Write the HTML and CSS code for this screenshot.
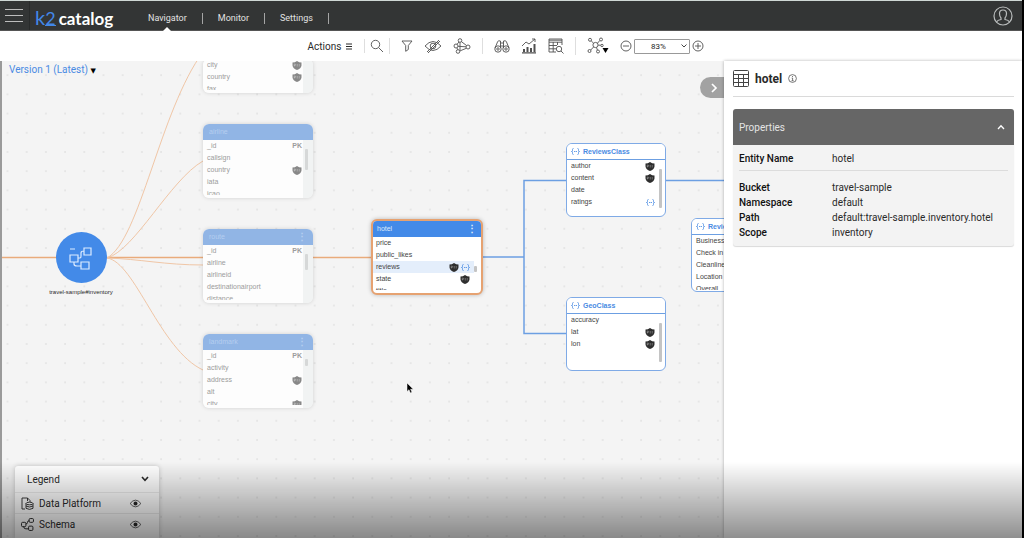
FILE: index.html
```html
<!DOCTYPE html>
<html lang="en">
<head>
  <meta charset="UTF-8" />
  <meta name="viewport" content="width=device-width, initial-scale=1.0"/>
  <title>K2 Catalog</title>
  <link rel="stylesheet" href="styles.css">
</head>
<body>
  <!-- shared icons -->
  <svg class="defs" aria-hidden="true">
    <symbol id="pii" viewBox="0 0 20 18">
      <path d="M1 3 Q6 3 10 0 Q14 3 19 3 V9 Q18 15 10 18 Q2 15 1 9Z" fill="currentColor"/>
      <path d="M4.500 11V6H6.500Q8 7.500 6.500 9H4.500M10.500 6v5M14.500 6v5" fill="none" stroke="#fff" stroke-width="1" opacity=".6"/>
    </symbol>
    <symbol id="obj" viewBox="0 0 18 14">
      <path d="M5 1Q3 1 3 3V5Q3 7 1 7Q3 7 3 9V11Q3 13 5 13M13 1Q15 1 15 3V5Q15 7 17 7Q15 7 15 9V11Q15 13 13 13M6 7H8.500M9.500 7H12" fill="none" stroke="currentColor" stroke-width="1.700"/>
    </symbol>
    <symbol id="eye" viewBox="0 0 14 10">
      <path d="M1 5Q7 -2.500 13 5Q7 12.500 1 5Z" fill="none" stroke="currentColor" stroke-width=".8"/>
      <circle cx="7" cy="5" r="2.200" fill="currentColor"/>
    </symbol>
    <symbol id="schema" viewBox="0 0 24 24">
      <path d="M1 9h8v7H1zM15 2h7v7h-7zM12 16h8v7h-8zM9 12h2Q12 12 12 10V7Q12 5 15 5M5 16v2Q5 20 8 20h4M1 3h5" fill="none" stroke="currentColor" stroke-width="1.200"/>
    </symbol>
    <symbol id="schema-small" viewBox="0 0 24 24">
      <rect x="1" y="8" width="8" height="8" rx="2" fill="none" stroke="currentColor" stroke-width="1.800"/>
      <rect x="15" y="1" width="8" height="7" rx="2" fill="none" stroke="currentColor" stroke-width="1.800"/>
      <rect x="14" y="15" width="8" height="8" rx="2" fill="none" stroke="currentColor" stroke-width="1.800"/>
      <path d="M9 11Q12 11 12 8T15 5M5 16Q5 20 9 20H14" fill="none" stroke="currentColor" stroke-width="1.800"/>
    </symbol>
  </svg>

  <header class="topbar">
    <button class="menu-btn" aria-label="Menu"><span></span><span></span><span></span></button>
    <a class="logo" href="#"><span class="logo-k2">k<small>2</small></span><span class="logo-name">catalog</span></a>
    <nav class="nav">
      <a class="active" href="#">Navigator</a>
      <a href="#">Monitor</a>
      <a href="#">Settings</a>
    </nav>
    <button class="user-btn" aria-label="Account">
      <svg width="20" height="20" viewBox="0 0 20 20" fill="none" stroke="currentColor" stroke-width="1.200">
        <circle cx="10" cy="10" r="9"/>
        <path d="M3.500 16Q4.500 14 8 13.500V12Q6.500 10.500 6.500 7.500Q6.500 4 10 4Q13.500 4 13.500 7.500Q13.500 10.500 12 12V13.500Q15.500 14 16.500 16"/>
      </svg>
    </button>
  </header>

  <div class="toolbar">
    <button class="actions">Actions <svg width="6" height="7" viewBox="0 0 6 7" stroke="currentColor"><path d="M0 1h6M0 3.500h6M0 6h6"/></svg></button>
    <div class="tools">
      <button aria-label="Search"><svg width="14" height="14" viewBox="0 0 14 14"><circle cx="5.500" cy="5.500" r="4.200"/><path d="M8.600 8.600L13 13"/></svg></button>
    </div>
    <div class="tools">
      <button aria-label="Filter"><svg width="12" height="12" viewBox="0 0 12 12"><path d="M1 1H11L7.300 5.500V9.500L4.700 11.300V5.500Z"/></svg></button>
      <button aria-label="Hide"><svg width="18" height="14" viewBox="0 0 18 14"><path d="M1 7Q9 -2 17 7Q9 16 1 7ZM15 1L3 13M16 2L4 14"/><circle cx="9" cy="7" r="2.800"/></svg></button>
      <button aria-label="Lineage"><svg width="18" height="16" viewBox="0 0 18 16"><circle cx="7" cy="2.500" r="1.800"/><circle cx="3" cy="8" r="2"/><circle cx="15" cy="9" r="2"/><circle cx="5" cy="13.500" r="1.800"/><path d="M6 4L4 6.300M8.500 3.700L13.500 7.500M5 8.300L13 8.800M4 10L4.700 11.700M6.700 13L13.300 10.300M7 4.300V12"/></svg></button>
    </div>
    <div class="tools">
      <button aria-label="Explore"><svg width="16" height="14" viewBox="0 0 16 14"><circle cx="4" cy="10" r="3.200"/><circle cx="12" cy="10" r="3.200"/><circle cx="4" cy="10" r="1.200"/><circle cx="12" cy="10" r="1.200"/><path d="M1 9L3.500 3Q4 1 6.500 2V9M15 9L12.500 3Q12 1 9.500 2V9M6.500 4h3M6.500 7h3"/></svg></button>
      <button aria-label="Statistics"><svg width="16" height="16" viewBox="0 0 16 16"><path d="M1 8L5 4L8 6L14 1M11 1H14V4"/><path class="fill" d="M2 11h2v3H2zM5.500 9h2v5h-2zM9 10h2v4H9zM12.500 6h2v8h-2zM1 14.300h14v1.200H1z"/></svg></button>
      <button aria-label="Table search"><svg width="16" height="16" viewBox="0 0 16 16"><path d="M14 7V1H1V14H8M1 2.200H14M1 4.200H14M1 7.500H9M1 10.800H8M5.200 4V14M9.500 4V7"/><circle cx="11" cy="11" r="2.700"/><path d="M13 13L15.500 15.500"/></svg></button>
    </div>
    <div class="tools tools-view">
      <button class="layout-btn" aria-label="Layout"><svg width="22" height="18" viewBox="0 0 22 18"><circle cx="8.500" cy="8" r="2.600"/><circle cx="3" cy="2.800" r="1.500"/><circle cx="14" cy="2.500" r="1.500"/><circle cx="2.500" cy="14" r="1.500"/><circle cx="11" cy="14.500" r="1.500"/><circle cx="15" cy="8.500" r="1.200"/><path d="M4.200 3.900L6.600 6.200M12.800 3.500L10.500 6.200M3.700 13L6.600 10M10.400 13L9.500 10.500M11.200 8.200H13.700"/><path class="arrow" d="M15.500 11H21.500L18.500 16Z"/></svg></button>
      <button aria-label="Zoom out"><svg width="12" height="12" viewBox="0 0 12 12"><circle cx="6" cy="6" r="5"/><path d="M3 6h6"/></svg></button>
      <select class="zoom" aria-label="Zoom level">
        <option>83%</option>
        <option>100%</option>
      </select>
      <button aria-label="Zoom in"><svg width="12" height="12" viewBox="0 0 12 12"><circle cx="6" cy="6" r="5"/><path d="M3 6h6M6 3v6"/></svg></button>
    </div>
  </div>

  <main class="main">
    <section class="canvas">
      <svg class="edges" aria-hidden="true">
        <defs>
          <pattern id="dots" x="6.500" y="-6" width="19.200" height="19.200" patternUnits="userSpaceOnUse">
            <circle cx="1" cy="1" r=".8" fill="#d4d4d4"/>
          </pattern>
        </defs>
        <rect width="100%" height="100%" fill="url(#dots)"/>
        <g class="orange">
          <path class="strong" d="M0 196.500H372"/>
          <path d="M107 197C140 179 160 49 203 -9"/>
          <path d="M107 197C135 189 170 119 203 100"/>
          <path d="M107 197C140 198 165 204 203 204"/>
          <path d="M107 197C135 201 160 289 203 309"/>
        </g>
        <path class="blue" d="M482 196H524M566 119.500H524V272.500H566M666 119.500H760"/>
      </svg>

      <button class="version">Version 1 (Latest) <span>▼</span></button>

      <div class="schema">
        <div class="schema-circle"><svg width="24" height="24"><use href="#schema"/></svg></div>
        <p>travel-sample#inventory</p>
      </div>

      <article class="node faded node-airport">
        <ul>
          <li>city<svg class="pii"><use href="#pii"/></svg></li>
          <li>country<svg class="pii"><use href="#pii"/></svg></li>
          <li>fax</li>
        </ul>
      </article>

      <article class="node faded node-airline">
        <h3>airline</h3>
        <ul>
          <li>_id<b>PK</b></li>
          <li>callsign</li>
          <li>country<svg class="pii"><use href="#pii"/></svg></li>
          <li>iata</li>
          <li>icao</li>
        </ul>
        <i class="thumb"></i>
      </article>

      <article class="node faded node-route">
        <h3>route<span>⋮</span></h3>
        <ul>
          <li>_id<b>PK</b></li>
          <li>airline</li>
          <li>airlineid</li>
          <li>destinationairport</li>
          <li>distance</li>
        </ul>
        <i class="thumb"></i>
      </article>

      <article class="node faded node-landmark">
        <h3>landmark<span>⋮</span></h3>
        <ul>
          <li>_id<b>PK</b></li>
          <li>activity</li>
          <li>address<svg class="pii"><use href="#pii"/></svg></li>
          <li>alt</li>
          <li>city<svg class="pii"><use href="#pii"/></svg></li>
        </ul>
        <i class="thumb"></i>
      </article>

      <article class="node selected node-hotel">
        <h3>hotel<span>⋮</span></h3>
        <ul>
          <li>price</li>
          <li>public_likes</li>
          <li class="current">reviews<svg class="pii"><use href="#pii"/></svg><svg class="obj"><use href="#obj"/></svg></li>
          <li>state<svg class="pii"><use href="#pii"/></svg></li>
          <li>title</li>
        </ul>
        <i class="thumb"></i>
      </article>

      <article class="node class-node node-reviews">
        <h3><svg class="obj"><use href="#obj"/></svg>ReviewsClass</h3>
        <ul>
          <li>author<svg class="pii"><use href="#pii"/></svg></li>
          <li>content<svg class="pii"><use href="#pii"/></svg></li>
          <li>date</li>
          <li>ratings<svg class="obj"><use href="#obj"/></svg></li>
        </ul>
        <i class="thumb"></i>
      </article>

      <article class="node class-node node-geo">
        <h3><svg class="obj"><use href="#obj"/></svg>GeoClass</h3>
        <ul>
          <li>accuracy</li>
          <li>lat<svg class="pii"><use href="#pii"/></svg></li>
          <li>lon<svg class="pii"><use href="#pii"/></svg></li>
        </ul>
        <i class="thumb"></i>
      </article>

      <article class="node class-node node-ratings">
        <h3><svg class="obj"><use href="#obj"/></svg>Revie</h3>
        <ul>
          <li>Business</li>
          <li>Check in .</li>
          <li>Cleanlines</li>
          <li>Location</li>
          <li>Overall</li>
        </ul>
      </article>

      <button class="collapse" aria-label="Collapse panel"><svg width="8" height="10" viewBox="0 0 8 10" fill="none" stroke="#fff" stroke-width="1.700"><path d="M2 1L6 5L2 9"/></svg></button>

      <svg class="cursor" width="9" height="12" viewBox="0 0 9 12" aria-hidden="true"><path d="M1 1V9.500L3 7.700L4.400 11L6 10.300L4.600 7.200H7.300Z" fill="#000" stroke="#fff" stroke-width=".5"/></svg>

      <div class="legend">
        <button class="legend-head">Legend <svg width="8" height="6" viewBox="0 0 8 6" fill="none" stroke="currentColor" stroke-width="1.600"><path d="M1 1L4 4.300L7 1"/></svg></button>
        <div class="legend-row">
          <svg width="13" height="13" viewBox="0 0 13 13" fill="none" stroke="currentColor" stroke-width=".9"><path d="M4 12H1V1H6.500L9 3.500V5M6.500 1V4"/><ellipse cx="8.500" cy="6.500" rx="3.500" ry="1.300"/><path d="M5 6.500V11.300Q8.500 13.500 12 11.300V6.500M5 9Q8.500 11 12 9"/></svg>
          <span>Data Platform</span>
          <button aria-label="Toggle Data Platform"><svg width="13" height="9"><use href="#eye"/></svg></button>
        </div>
        <div class="legend-row">
          <svg width="13" height="13"><use href="#schema-small"/></svg>
          <span>Schema</span>
          <button aria-label="Toggle Schema"><svg width="13" height="9"><use href="#eye"/></svg></button>
        </div>
      </div>
    </section>

    <aside class="panel">
      <div class="panel-head">
        <svg width="16" height="17" viewBox="0 0 16 17" fill="none" stroke="#444"><rect x=".5" y=".5" width="15" height="16" rx="1"/><path d="M.5 4.500h15M.5 8.500h15M.5 12.500h15M5.500 4.500v12M10.500 4.500v12"/></svg>
        <h2>hotel</h2>
        <svg width="9" height="9" viewBox="0 0 9 9" fill="none" stroke="#555" stroke-width=".8"><circle cx="4.500" cy="4.500" r="3.900"/><path d="M3.700 4H4.600V6.700M3.600 6.700h2M4.500 2v1"/></svg>
      </div>
      <section class="props">
        <button class="props-head">Properties <svg width="8" height="6" viewBox="0 0 8 6" fill="none" stroke="#fff" stroke-width="1.300"><path d="M1 5L4 1.700L7 5"/></svg></button>
        <dl class="name-row">
          <dt>Entity Name</dt><dd>hotel</dd>
        </dl>
        <dl>
          <dt>Bucket</dt><dd>travel-sample</dd>
          <dt>Namespace</dt><dd>default</dd>
          <dt>Path</dt><dd>default:travel-sample.inventory.hotel</dd>
          <dt>Scope</dt><dd>inventory</dd>
        </dl>
      </section>
    </aside>
  </main>
  <div class="shade"></div>
</body>
</html>
```

FILE: styles.css
```css
* {
  box-sizing: border-box;
}
body {
  margin: 0;
  height: 100vh;
  display: flex;
  flex-direction: column;
  overflow: hidden;
  font-family: Roboto, Arial, sans-serif;
  font-size: 10px;
  color: #2a2a2a;
  background: #fff;
  border-right: 2px solid #000;
}
button {
  font: inherit;
  color: inherit;
  background: none;
  border: none;
  padding: 0;
  cursor: pointer;
}
svg {
  display: block;
}
a {
  text-decoration: none;
}
.defs {
  position: absolute;
  width: 0;
  height: 0;
}

/* top bar */
.topbar {
  flex: none;
  display: flex;
  align-items: stretch;
  height: 31px;
  background: #333535;
  border-top: 1px solid #cfd8d5;
  border-bottom: 1px solid #555;
}
.menu-btn {
  width: 30px;
  padding: 0 6px 0 5px;
  display: flex;
  flex-direction: column;
  justify-content: center;
  gap: 5px;
  border-right: 1px solid #292b2b;
}
.menu-btn span {
  height: 1px;
  background: #bdbdbd;
}
.logo {
  width: 103px;
  padding: 5px 0 0 5px;
  display: flex;
  align-items: baseline;
  gap: 3px;
  font-family: Lato, sans-serif;
  line-height: 22px;
}
.logo-k2 {
  font-size: 20px;
  color: #4287e8;
}
.logo-k2 small {
  font-size: 18px;
  border-bottom: 1px solid #4287e8;
  display: inline-block;
  line-height: 14px;
}
.logo-name {
  font-size: 17px;
  font-weight: bold;
  color: #fff;
}
.nav {
  display: flex;
  align-items: center;
  padding-top: 6px;
}
.nav a {
  position: relative;
  padding: 0 15px;
  font-size: 9px;
  line-height: 11px;
  color: #e2e2e2;
  border-right: 1px solid #a5a5a5;
}
.nav .active::after {
  content: "";
  position: absolute;
  left: 50%;
  bottom: -8px;
  margin-left: -5px;
  border: 5px solid transparent;
  border-top: none;
  border-bottom-color: #fff;
}
.user-btn {
  margin-left: auto;
  padding: 0 9px;
  color: #b9bcbc;
}

/* toolbar */
.toolbar {
  flex: none;
  display: flex;
  align-items: center;
  justify-content: center;
  height: 30px;
  padding-right: 10px;
}
.actions {
  display: flex;
  align-items: center;
  gap: 5px;
  padding-right: 12px;
}
.tools {
  display: flex;
  align-items: center;
  gap: 11px;
  padding: 0 11px;
  border-left: 1px solid #dedede;
}
.tools:nth-child(2) {
  padding: 0 5px;
}
.tools-view {
  gap: 2px;
  padding-right: 0;
}
.tools svg {
  fill: none;
  stroke: #505050;
  stroke-width: 0.9;
}
.tools .fill {
  fill: #505050;
  stroke: none;
}
.tools .arrow {
  fill: #000;
  stroke: none;
}
.layout-btn {
  margin-right: 9px;
}
.zoom {
  appearance: none;
  width: 56px;
  height: 15px;
  padding: 0 8px 0 0;
  font-family: inherit;
  font-size: 8px;
  color: #222;
  text-align-last: center;
  border: 1px solid #999;
  border-radius: 1px;
  background: #fff url("data:image/svg+xml,%3Csvg xmlns='http://www.w3.org/2000/svg' width='6' height='4' fill='none' stroke='%23444'%3E%3Cpath d='M.5 .5L3 3L5.500 .5'/%3E%3C/svg%3E") no-repeat right 2px center;
}

/* canvas */
.main {
  flex: 1;
  display: flex;
  min-height: 0;
}
.canvas {
  flex: 1;
  position: relative;
  overflow: hidden;
  background: #f4f4f4;
}
.canvas::before {
  content: "";
  position: absolute;
  z-index: 1;
  top: 0;
  bottom: 0;
  left: 0;
  width: 2px;
  background: #9a9a9a;
}
.edges {
  position: absolute;
  width: 100%;
  height: 100%;
}
.edges .orange {
  fill: none;
  stroke: #f0c6a6;
}
.edges .strong {
  stroke: #e9ab7b;
  stroke-width: 1.5;
}
.edges .blue {
  fill: none;
  stroke: #6c9fe2;
  stroke-width: 1.5;
}
.version {
  position: absolute;
  left: 9px;
  top: 2px;
  line-height: 14px;
  color: #4a8be3;
}
.version span {
  font-family: "DejaVu Sans", sans-serif;
  font-size: 7px;
  color: #000;
}
.schema {
  position: absolute;
  left: 41px;
  top: 171px;
  width: 80px;
  text-align: center;
}
.schema-circle {
  width: 51px;
  height: 51px;
  margin: 0 auto 4px;
  display: flex;
  align-items: center;
  justify-content: center;
  border-radius: 50%;
  background: #438ae8;
  color: #dcebff;
}
.schema p {
  margin: 0;
  font: 6px/10px "Liberation Sans", Arial, sans-serif;
}

.node {
  position: absolute;
  width: 110px;
  height: 74px;
  overflow: hidden;
  border-radius: 6px;
  background: #fff;
  box-shadow: 0 0 4px rgba(0, 0, 0, 0.25);
  font: 7px/12px "Liberation Sans", Arial, sans-serif;
  color: #444;
}
.node h3 {
  display: flex;
  align-items: center;
  margin: 0;
  height: 16px;
  padding: 0 6px;
  font-size: 7px;
  font-weight: normal;
  color: #dce9fb;
  background: #438ae8;
}
.node h3 span {
  margin-left: auto;
  font-size: 10px;
  font-weight: bold;
}
.node ul {
  margin: 0;
  padding: 0;
  max-height: 55px;
  overflow: hidden;
  list-style: none;
}
.node li {
  display: flex;
  align-items: center;
  gap: 2px;
  height: 12px;
  padding: 0 11px 0 4px;
}
.node li b {
  margin-left: auto;
}
.node li svg:first-of-type {
  margin-left: auto;
}
.pii {
  width: 10px;
  height: 9px;
  color: #2e2e2e;
}
.obj {
  width: 9px;
  height: 7px;
  color: #4a8be3;
}
.thumb {
  position: absolute;
  right: 5px;
  width: 3px;
  border-radius: 1px;
  background: #c4c4c4;
}
.faded {
  color: #9c9c9c;
  background: linear-gradient(to right, #fdfdfd 100px, #f1f3f3 100px);
  box-shadow: 0 0 4px rgba(0, 0, 0, 0.15);
}
.faded h3 {
  color: #b5cef0;
  background: #91b5e5;
}
.faded .pii {
  color: #888;
}
.faded .thumb {
  background: #d6d8d8;
}
.selected {
  width: 112px;
  height: 76px;
  border: 2px solid #e6a271;
}
.selected h3 {
  padding: 0 4px;
}
.selected ul {
  max-height: 53px;
  padding: 0 7px 0 0;
}
.selected li {
  padding: 0 4px 0 3px;
}
.selected .current {
  background: #e4eefb;
}
.class-node {
  width: 100px;
  border: 1px solid #7faae6;
  box-shadow: none;
}
.class-node h3 {
  gap: 3px;
  padding: 0 4px;
  font-weight: bold;
  color: #4a8be3;
  background: #fff;
  border-bottom: 1px solid #6c9fe2;
}
.class-node li {
  padding: 0 10px 0 4px;
}
.class-node .thumb {
  right: 3px;
  top: 25px;
  height: 39px;
}
.node-airport {
  left: 203px;
  top: -2px;
  height: 34px;
}
.node-airport ul {
  max-height: 31px;
}
.node-airline {
  left: 203px;
  top: 63px;
}
.node-airline .thumb {
  top: 25px;
  height: 21px;
}
.node-route {
  left: 203px;
  top: 168px;
}
.node-route .thumb {
  top: 25px;
  height: 16px;
}
.node-landmark {
  left: 203px;
  top: 273px;
}
.node-landmark .thumb {
  top: 25px;
  height: 7px;
}
.node-hotel {
  left: 371px;
  top: 158px;
}
.node-hotel .thumb {
  right: 4px;
  top: 45px;
  height: 6px;
}
.node-reviews {
  left: 566px;
  top: 82px;
}
.node-geo {
  left: 566px;
  top: 236px;
}
.node-ratings {
  left: 691px;
  top: 157px;
}
.collapse {
  position: absolute;
  right: 0;
  top: 16px;
  width: 24px;
  height: 21px;
  padding-left: 10px;
  border-radius: 11px 0 0 11px;
  background: #a2a2a2;
}
.cursor {
  position: absolute;
  left: 406px;
  top: 321px;
}

.legend {
  position: absolute;
  left: 15px;
  bottom: 0;
  width: 144px;
  border-radius: 3px 3px 0 0;
  background: #fff;
  box-shadow: 0 0 5px rgba(0, 0, 0, 0.2);
}
.legend-head {
  display: flex;
  align-items: center;
  justify-content: space-between;
  width: 100%;
  height: 26px;
  padding: 0 10px 0 12px;
}
.legend-row {
  display: flex;
  align-items: center;
  height: 21px;
  padding: 0 17px 0 6px;
  border-top: 1px solid #ececec;
}
.legend-row:last-child {
  height: 25px;
  padding-bottom: 4px;
}
.legend-row span {
  margin: 0 auto 0 5px;
}

/* side panel */
.panel {
  flex: none;
  width: 298px;
  padding: 0 8px 0 9px;
  background: #fff;
  box-shadow: 0 0 3px rgba(0, 0, 0, 0.3);
  z-index: 1;
}
.panel-head {
  display: flex;
  align-items: center;
  height: 36px;
  border-bottom: 1px solid #dadada;
}
.panel-head h2 {
  margin: 0 6px;
  font-size: 12px;
  font-weight: 700;
}
.props {
  margin-top: 12px;
  padding-bottom: 6px;
  border-radius: 3px;
  background: #f3f3f3;
  box-shadow: 0 1px 1px rgba(0, 0, 0, 0.15);
}
.props-head {
  display: flex;
  align-items: center;
  justify-content: space-between;
  width: 100%;
  height: 36px;
  padding: 0 9px 0 6px;
  color: #e4e4e4;
  background: #666;
  border-radius: 3px 3px 0 0;
}
.props dl {
  display: grid;
  grid-template-columns: 93px 1fr;
  margin: 0 6px;
  line-height: 15px;
}
.props .name-row {
  padding: 6px 0 4px;
  margin-bottom: 9px;
  border-bottom: 1px solid #dcdcdc;
}
.props dt {
  font-weight: 500;
  color: #111;
}
.props dd {
  margin: 0;
}

/* darkens the lower edge of the view */
.shade {
  position: fixed;
  z-index: 2;
  left: 0;
  right: 0;
  bottom: 0;
  height: 76px;
  background: linear-gradient(rgba(0, 0, 0, 0), rgba(0, 0, 0, 0.44));
  pointer-events: none;
}
```
